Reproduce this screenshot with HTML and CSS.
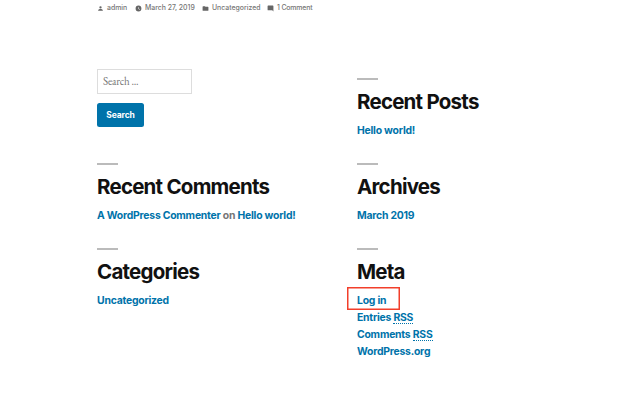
FILE: index.html
```html
<!DOCTYPE html>
<html lang="en">
<head>
<meta charset="utf-8">
<title>WordPress</title>
<link rel="stylesheet" href="styles.css">
</head>
<body>
<footer class="entry-meta">
  <span class="meta-item author"><svg class="icon" viewBox="0 0 24 24"><path d="M12 12a4 4 0 1 0 0-8 4 4 0 0 0 0 8zm0 2c-2.700 0-8 1.300-8 4v2h16v-2c0-2.700-5.300-4-8-4z"/></svg><span>admin</span></span>
  <span class="meta-item date"><svg class="icon" viewBox="0 0 24 24"><path fill-rule="evenodd" d="M12 2a10 10 0 1 0 0 20 10 10 0 0 0 0-20zm4.200 14.200L11 13V7h1.500v5.200l4.500 2.700z"/></svg><span>March 27, 2019</span></span>
  <span class="meta-item category"><svg class="icon" viewBox="0 0 24 24"><path d="M10 4H4c-1.100 0-2 .9-2 2v12c0 1.100.9 2 2 2h16c1.100 0 2-.9 2-2V8c0-1.100-.9-2-2-2h-8z"/></svg><span>Uncategorized</span></span>
  <span class="meta-item comments"><svg class="icon" viewBox="0 0 24 24"><path d="M22 4c0-1.100-.9-2-2-2H4c-1.100 0-2 .9-2 2v12c0 1.100.9 2 2 2h14l4 4z"/></svg><span>1 Comment</span></span>
</footer>
<aside class="widgets">
  <form class="search">
    <input class="search-field" type="search" placeholder="Search ...">
    <button class="search-submit" type="button">Search</button>
  </form>
  <section class="widget">
    <h2>Recent Posts</h2>
    <ul><li><a>Hello world!</a></li></ul>
  </section>
  <section class="widget">
    <h2>Recent Comments</h2>
    <ul><li><a>A WordPress Commenter</a> on <a>Hello world!</a></li></ul>
  </section>
  <section class="widget">
    <h2>Archives</h2>
    <ul><li><a>March 2019</a></li></ul>
  </section>
  <section class="widget">
    <h2>Categories</h2>
    <ul><li><a>Uncategorized</a></li></ul>
  </section>
  <section class="widget">
    <h2>Meta</h2>
    <ul>
      <li class="login"><a>Log in</a></li>
      <li><a>Entries <abbr>RSS</abbr></a></li>
      <li><a>Comments <abbr>RSS</abbr></a></li>
      <li><a>WordPress.org</a></li>
    </ul>
  </section>
</aside>
</body>
</html>
```
FILE: styles.css
```css
*, *::before, *::after { box-sizing: border-box; }
body {
  margin: 0;
  padding-left: 97px;
  height: 400px;
  overflow: hidden;
  background: #fff;
  color: #767676;
  font-family: Inter, "Liberation Sans", sans-serif;
}
.entry-meta {
  display: flex;
  height: 15px;
  font-size: 6.900px;
  line-height: 15px;
  font-weight: 500;
  white-space: nowrap;
}
.meta-item { display: flex; align-items: center; gap: 3px; }
.author { width: 38px; }
.date { width: 67px; }
.category { width: 65px; }
.comments { letter-spacing: -0.140px; }
.icon { width: 7px; height: 7px; fill: #666; margin-top: 1px; }
.widgets {
  display: grid;
  grid-template-columns: 260px 220px;
  grid-template-rows: 85px 85px auto;
  padding-top: 63px;
}
.search {
  display: flex;
  flex-direction: column;
  align-items: flex-start;
  gap: 9px;
  margin-top: -9px;
}
.search-field {
  width: 95px;
  height: 25px;
  padding: 0 5px 2px;
  border: 1px solid #ddd;
  border-radius: 0;
  appearance: none;
  background: #fff;
  font: 11px "EB Garamond", "Liberation Serif", serif;
  letter-spacing: -0.200px;
}
.search-field::placeholder { color: #767676; }
.search-submit {
  width: 47px;
  height: 24px;
  padding: 0;
  border: 0;
  border-radius: 2.500px;
  background: #0073aa;
  color: #fff;
  font: 700 8.500px Inter, sans-serif;
  letter-spacing: -0.100px;
}
h2 {
  margin: 0;
  color: #111;
  font-size: 20.500px;
  font-weight: 700;
  line-height: 26px;
  letter-spacing: -0.770px;
  white-space: nowrap;
}
h2::before {
  content: "";
  display: block;
  width: 21px;
  height: 2px;
  margin-bottom: 9px;
  background: #bbb;
}
ul {
  margin: 0;
  padding: 7px 0 0;
  list-style: none;
  font-size: 10.400px;
  font-weight: 700;
  line-height: 17px;
  letter-spacing: -0.220px;
  white-space: nowrap;
}
li { position: relative; height: 17px; }
a { color: #0073aa; }
abbr {
  text-decoration: none;
  display: inline-block;
  line-height: 10px;
  border-bottom: 1px dotted #0073aa;
}
.login::after {
  content: "";
  position: absolute;
  left: -10px;
  top: -5px;
  width: 53px;
  height: 23px;
  border: 1px solid #f23f2b;
  box-shadow: inset 0 0 0 0.500px #f23f2b;
}
```
